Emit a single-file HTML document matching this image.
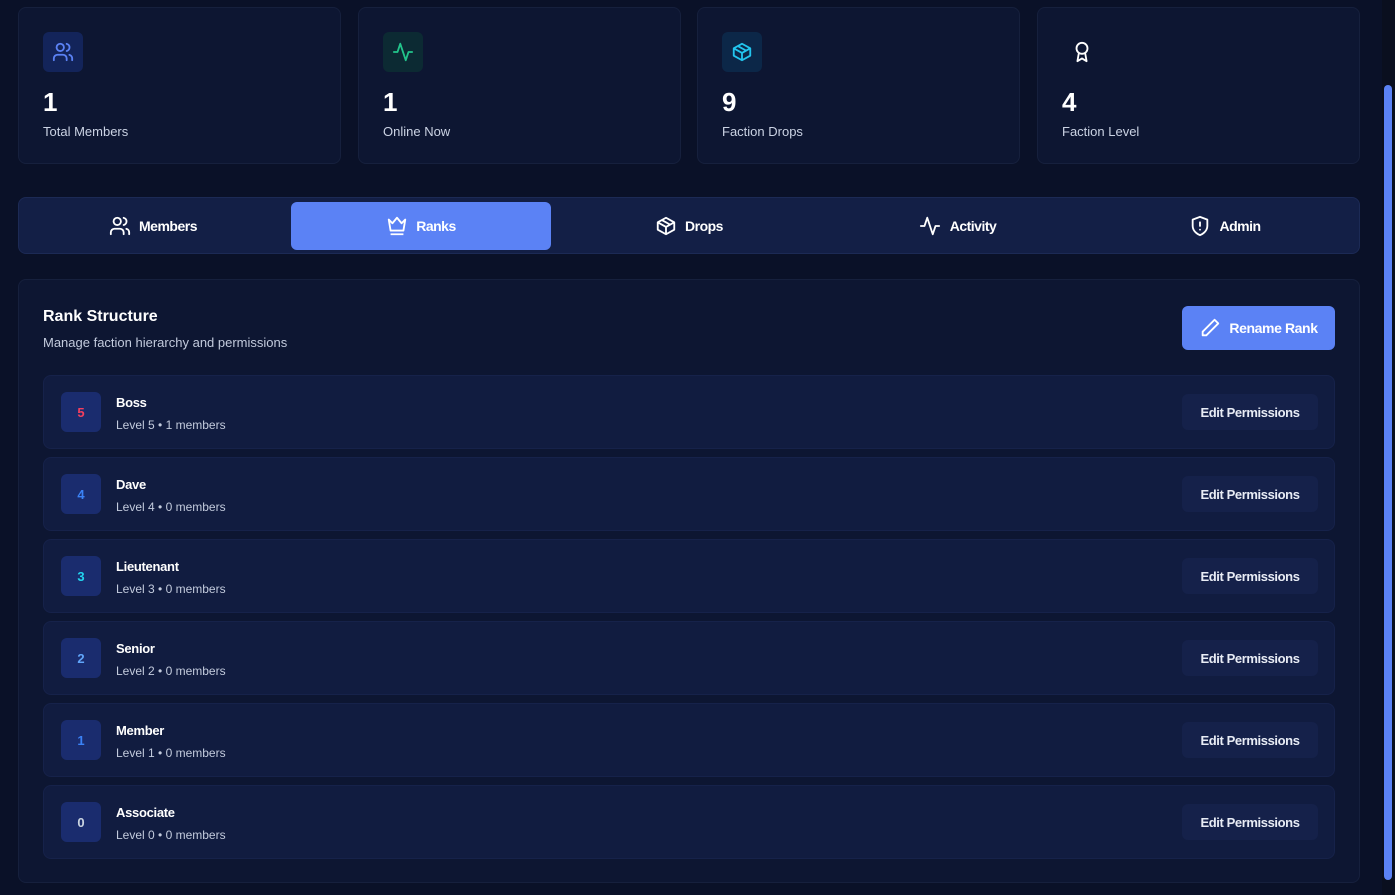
<!DOCTYPE html>
<html><head><meta charset="utf-8"><style>
*{box-sizing:border-box;margin:0;padding:0}
body{width:1395px;height:895px;overflow:hidden;background:#0a1128;font-family:"Liberation Sans",sans-serif;color:#fff;position:relative}
.card{position:absolute;top:7px;height:157px;width:323px;background:#0d1632;border:1px solid #16203d;border-radius:8px}
.ib{position:absolute;left:24px;top:24px;width:40px;height:40px;border-radius:6px;display:flex;align-items:center;justify-content:center}
.num{position:absolute;left:24px;top:79px;font-size:26px;font-weight:bold}
.lbl{position:absolute;left:24px;top:116px;font-size:13px;color:#cbd3e4}
.tabs{position:absolute;left:18px;top:197px;width:1342px;height:57px;background:#131f46;border:1px solid #1c2a55;border-radius:8px}
.tab{position:absolute;top:4px;height:48px;width:260px;display:flex;align-items:center;justify-content:center;gap:8px;font-size:14px;font-weight:bold;letter-spacing:-0.5px;border-radius:6px}
.tab.act{background:#5b82f5}
.panel{position:absolute;left:18px;top:279px;width:1342px;height:604px;background:#0d1632;border:1px solid #16203d;border-radius:8px}
.row{position:absolute;left:24px;width:1292px;height:74px;background:#111c40;border:1px solid #16224a;border-radius:8px}
.badge{position:absolute;left:17px;top:16px;width:40px;height:40px;background:#1a2c6e;border-radius:6px;display:flex;align-items:center;justify-content:center;font-size:13px;font-weight:bold}
.nm{position:absolute;left:72px;top:19px;font-size:13px;font-weight:bold;letter-spacing:-0.3px}
.sb{position:absolute;left:72px;top:42px;font-size:12px;color:#c3cbdd}
.ep{position:absolute;left:1138px;top:18px;width:136px;height:36px;background:#15214a;border-radius:6px;display:flex;align-items:center;justify-content:center;font-size:13px;font-weight:bold;letter-spacing:-0.4px;color:#e8ecf5}
</style></head><body>
<div class="card" style="left:18px"><div class="ib" style="background:#13245a"><svg width="22" height="22" viewBox="0 0 24 24" fill="none" stroke="#5b82f5" stroke-width="2" stroke-linecap="round"><circle cx="9" cy="7" r="4"/><path d="M2 21v-2a4 4 0 0 1 4-4h6a4 4 0 0 1 4 4v2M16 3.1a4 4 0 0 1 0 7.8M22 21v-2a4 4 0 0 0-3-3.9"/></svg></div><div class="num">1</div><div class="lbl">Total Members</div></div>
<div class="card" style="left:358px"><div class="ib" style="background:#0c2a33"><svg width="22" height="22" viewBox="0 0 24 24" fill="none" stroke="#22c58b" stroke-width="2" stroke-linecap="round" stroke-linejoin="round"><path d="M22 12h-4l-3 9L9 3l-3 9H2"/></svg></div><div class="num">1</div><div class="lbl">Online Now</div></div>
<div class="card" style="left:697px"><div class="ib" style="background:#0c2748"><svg width="22" height="22" viewBox="0 0 24 24" fill="none" stroke="#22c5ee" stroke-width="2" stroke-linejoin="round"><path d="M21 8 12 3 3 8v8l9 5 9-5z M3 8l9 5 9-5 M12 13v8 M7.5 5.5l9 5"/></svg></div><div class="num">9</div><div class="lbl">Faction Drops</div></div>
<div class="card" style="left:1037px"><div class="ib"><svg width="22" height="22" viewBox="0 0 24 24" fill="none" stroke="#fff" stroke-width="2" stroke-linejoin="round"><circle cx="12" cy="8" r="6"/><path d="M15.5 13.5 17 22l-5-3-5 3 1.5-8.5"/></svg></div><div class="num">4</div><div class="lbl">Faction Level</div></div>

<div class="tabs">
<div class="tab" style="left:4px"><svg width="22" height="22" viewBox="0 0 24 24" fill="none" stroke="#fff" stroke-width="2" stroke-linecap="round"><circle cx="9" cy="7" r="4"/><path d="M2 21v-2a4 4 0 0 1 4-4h6a4 4 0 0 1 4 4v2M16 3.1a4 4 0 0 1 0 7.8M22 21v-2a4 4 0 0 0-3-3.9"/></svg>Members</div>
<div class="tab act" style="left:272px"><svg width="22" height="22" viewBox="0 0 24 24" fill="none" stroke="#fff" stroke-width="2" stroke-linejoin="round"><path d="M3 5l4 4 5-6 5 6 4-4-2 12H5z M5 21h14"/></svg>Ranks</div>
<div class="tab" style="left:540px"><svg width="22" height="22" viewBox="0 0 24 24" fill="none" stroke="#fff" stroke-width="2" stroke-linejoin="round"><path d="M21 8 12 3 3 8v8l9 5 9-5z M3 8l9 5 9-5 M12 13v8 M7.5 5.5l9 5"/></svg>Drops</div>
<div class="tab" style="left:808px"><svg width="24" height="22" viewBox="0 0 24 24" fill="none" stroke="#fff" stroke-width="2" stroke-linecap="round" stroke-linejoin="round"><path d="M22 12h-4l-3 9L9 3l-3 9H2"/></svg>Activity</div>
<div class="tab" style="left:1076px"><svg width="22" height="22" viewBox="0 0 24 24" fill="none" stroke="#fff" stroke-width="2" stroke-linecap="round" stroke-linejoin="round"><path d="M12 22s8-3 8-10V5l-8-3-8 3v7c0 7 8 10 8 10z M12 8v4 M12 16h.01"/></svg>Admin</div>
</div>

<div class="panel">
<div style="position:absolute;left:24px;top:28px;font-size:16px;font-weight:bold">Rank Structure</div>
<div style="position:absolute;left:24px;top:55px;font-size:13px;color:#c3cbdd">Manage faction hierarchy and permissions</div>
<div style="position:absolute;left:1163px;top:26px;width:153px;height:44px;background:#5b82f5;border-radius:6px;display:flex;align-items:center;justify-content:center;gap:8px;font-size:14px;font-weight:bold;letter-spacing:-0.4px"><svg width="22" height="22" viewBox="0 0 24 24" fill="none" stroke="#fff" stroke-width="2" stroke-linejoin="round"><path d="M17 3l4 4L8 20H4v-4z"/></svg>Rename Rank</div>
<div class="row" style="top:95px"><div class="badge" style="color:#f43f5e">5</div><div class="nm">Boss</div><div class="sb">Level 5 • 1 members</div><div class="ep">Edit Permissions</div></div>
<div class="row" style="top:177px"><div class="badge" style="color:#3b82f6">4</div><div class="nm">Dave</div><div class="sb">Level 4 • 0 members</div><div class="ep">Edit Permissions</div></div>
<div class="row" style="top:259px"><div class="badge" style="color:#22d3ee">3</div><div class="nm">Lieutenant</div><div class="sb">Level 3 • 0 members</div><div class="ep">Edit Permissions</div></div>
<div class="row" style="top:341px"><div class="badge" style="color:#60a5fa">2</div><div class="nm">Senior</div><div class="sb">Level 2 • 0 members</div><div class="ep">Edit Permissions</div></div>
<div class="row" style="top:423px"><div class="badge" style="color:#3b82f6">1</div><div class="nm">Member</div><div class="sb">Level 1 • 0 members</div><div class="ep">Edit Permissions</div></div>
<div class="row" style="top:505px"><div class="badge" style="color:#cbd5e1">0</div><div class="nm">Associate</div><div class="sb">Level 0 • 0 members</div><div class="ep">Edit Permissions</div></div>
</div>

<div style="position:absolute;left:1382px;top:0;width:13px;height:895px;background:#0a0f1f"></div>
<div style="position:absolute;left:1384px;top:85px;width:8px;height:795px;background:#5b82f5;border-radius:4px"></div>
</body></html>
